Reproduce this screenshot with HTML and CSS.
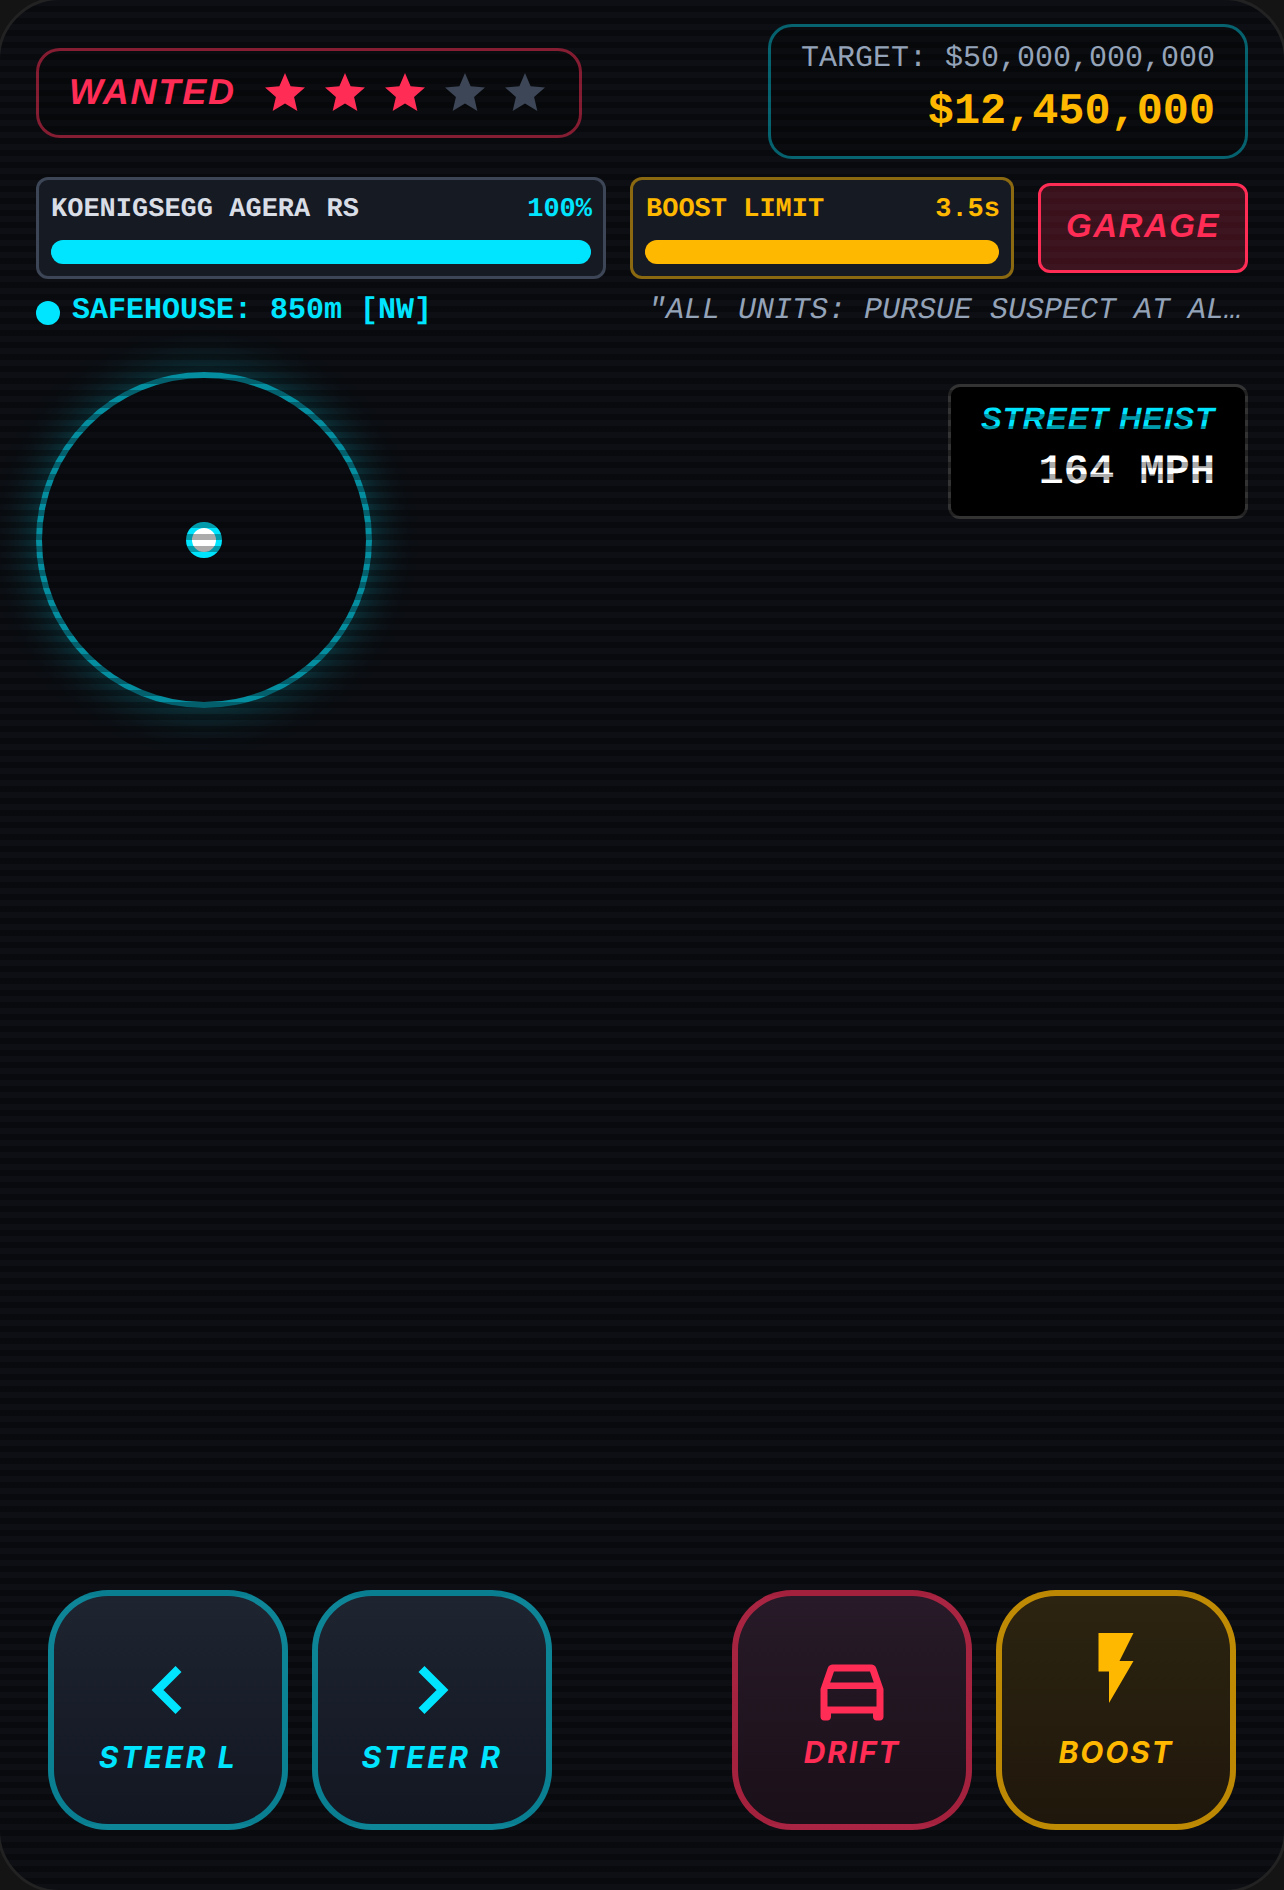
FILE: index.html
```html
<!DOCTYPE html>
<html lang="en">
<head>
    <meta charset="UTF-8">
    <meta name="viewport" content="width=device-width, initial-scale=1.0">
    <title>Street Heist</title>
    <link rel="stylesheet" href="styles.css">
</head>
<body>
    <div class="frame">
        <div class="scanlines"></div>

        <div class="hud">
            <div class="top-row">
                <div class="wanted">
                    <span class="wanted-label">WANTED</span>
                    <div class="stars">
                        <svg class="star on" viewBox="0 0 24 24"><path d="M12 17.27L18.18 21l-1.64-7.03L22 9.24l-7.19-.61L12 2 9.19 8.63 2 9.24l5.46 4.73L5.82 21z"/></svg>
                        <svg class="star on" viewBox="0 0 24 24"><path d="M12 17.27L18.18 21l-1.64-7.03L22 9.24l-7.19-.61L12 2 9.19 8.63 2 9.24l5.46 4.73L5.82 21z"/></svg>
                        <svg class="star on" viewBox="0 0 24 24"><path d="M12 17.27L18.18 21l-1.64-7.03L22 9.24l-7.19-.61L12 2 9.19 8.63 2 9.24l5.46 4.73L5.82 21z"/></svg>
                        <svg class="star" viewBox="0 0 24 24"><path d="M12 17.27L18.18 21l-1.64-7.03L22 9.24l-7.19-.61L12 2 9.19 8.63 2 9.24l5.46 4.73L5.82 21z"/></svg>
                        <svg class="star" viewBox="0 0 24 24"><path d="M12 17.27L18.18 21l-1.64-7.03L22 9.24l-7.19-.61L12 2 9.19 8.63 2 9.24l5.46 4.73L5.82 21z"/></svg>
                    </div>
                </div>
                <div class="money">
                    <div class="money-target">TARGET: $50,000,000,000</div>
                    <div class="money-value">$12,450,000</div>
                </div>
            </div>

            <div class="status-row">
                <div class="gauge gauge-car">
                    <div class="gauge-head">
                        <span class="car-name">KOENIGSEGG AGERA RS</span>
                        <span class="car-health">100%</span>
                    </div>
                    <div class="bar bar-cyan"></div>
                </div>
                <div class="gauge gauge-boost">
                    <div class="gauge-head">
                        <span>BOOST LIMIT</span>
                        <span>3.5s</span>
                    </div>
                    <div class="bar bar-amber"></div>
                </div>
                <button class="garage">GARAGE</button>
            </div>

            <div class="info-row">
                <div class="safehouse">
                    <span class="safehouse-dot"></span>
                    <span>SAFEHOUSE: 850m [NW]</span>
                </div>
                <div class="radio">"ALL UNITS: PURSUE SUSPECT AT AL…</div>
            </div>
        </div>

        <div class="field-row">
            <div class="radar">
                <span class="radar-dot"></span>
            </div>
            <div class="speed">
                <div class="speed-title">STREET HEIST</div>
                <div class="speed-value">164 MPH</div>
            </div>
        </div>

        <div class="controls">
            <div class="control-group">
                <button class="pad pad-steer">
                    <svg class="chevron" viewBox="0 0 24 24"><path d="M15.5 19l-7-7 7-7"/></svg>
                    <span>STEER L</span>
                </button>
                <button class="pad pad-steer">
                    <svg class="chevron" viewBox="0 0 24 24"><path d="M8.5 5l7 7-7 7"/></svg>
                    <span>STEER R</span>
                </button>
            </div>
            <div class="control-group">
                <button class="pad pad-drift">
                    <svg class="glyph" viewBox="0 0 24 24"><path d="M18.92 6.01C18.72 5.42 18.16 5 17.5 5h-11c-.66 0-1.21.42-1.42 1.01L3 12v8c0 .55.45 1 1 1h1c.55 0 1-.45 1-1v-1h12v1c0 .55.45 1 1 1h1c.55 0 1-.45 1-1v-8l-2.08-5.99zM6.85 7h10.29l1.08 3.11H5.77L6.85 7zM19 17H5v-5h14v5z"/></svg>
                    <span>DRIFT</span>
                </button>
                <button class="pad pad-boost">
                    <svg class="glyph bolt" viewBox="0 0 24 24"><path d="M7 2v11h3v9l7-12h-4l4-8z"/></svg>
                    <span>BOOST</span>
                </button>
            </div>
        </div>
    </div>
</body>
</html>
```

FILE: styles.css
```css
* {
    box-sizing: border-box;
}

html, body {
    margin: 0;
    height: 100%;
}

body {
    background-color: #141414;
    font-family: "Liberation Mono", monospace;
    text-rendering: geometricPrecision;
    overflow: hidden;
}

/* the 3px border hangs just outside the window, only the corners show it */
.frame {
    position: relative;
    width: 1290px;
    height: 1896px;
    margin: -3px;
    padding: 24px 36px 60px;
    display: flex;
    flex-direction: column;
    background-color: #0d0f14;
    border: 3px solid #222222;
    border-radius: 63px;
    overflow: hidden;
}

/* crt lines: over the map layer, under the hud and the pads */
.scanlines {
    position: absolute;
    inset: 0;
    background-image: repeating-linear-gradient(180deg, transparent 0, transparent 6px, rgba(0, 0, 0, 0.33) 6px, rgba(0, 0, 0, 0.33) 12px);
    pointer-events: none;
    z-index: 5;
}

.hud {
    position: relative;
    z-index: 6;
}

.top-row {
    display: flex;
    justify-content: space-between;
    align-items: center;
}

.wanted {
    width: 546px;
    height: 90px;
    padding: 0 30px;
    margin-top: 3px;
    display: flex;
    align-items: center;
    justify-content: space-between;
    background-color: rgba(0, 0, 0, 0.2);
    border: 3px solid rgba(255, 45, 85, 0.5);
    border-radius: 24px;
}

.wanted-label {
    margin-top: -2px;
    font-family: "Liberation Sans", sans-serif;
    font-size: 36px;
    font-weight: bold;
    font-style: italic;
    letter-spacing: 1.8px;
    color: #ff2d55;
}

.stars {
    display: flex;
    gap: 12px;
}

.star {
    width: 48px;
    height: 48px;
    fill: #3d4656;
}

.star.on {
    fill: #ff2d55;
}

.money {
    width: 480px;
    height: 135px;
    padding: 15px 30px 0;
    text-align: right;
    background-color: rgba(0, 0, 0, 0.2);
    border: 3px solid rgba(0, 229, 255, 0.4);
    border-radius: 24px;
}

.money-target {
    font-size: 30px;
    line-height: 34px;
    white-space: nowrap;
    color: #94a3b8;
}

.money-value {
    margin-top: 12px;
    font-size: 43.5px;
    line-height: 50px;
    font-weight: bold;
    color: #ffb800;
}

.status-row {
    margin-top: 18px;
    display: flex;
    align-items: center;
    gap: 24px;
}

.gauge {
    height: 102px;
    padding: 12px;
    background-color: #161a22;
    border: 3px solid #3d4656;
    border-radius: 12px;
}

.gauge-car {
    width: 570px;
}

.gauge-boost {
    width: 384px;
    border-color: rgba(255, 184, 0, 0.5);
    color: #ffb800;
}

.gauge-head {
    display: flex;
    justify-content: space-between;
    font-size: 27px;
    line-height: 36px;
    font-weight: bold;
}

.gauge-boost .gauge-head {
    margin: 0 -1px 0 1px;
}

.car-name {
    color: #d8dde6;
}

.car-health {
    margin-right: -1px;
    color: #00e5ff;
}

.bar {
    height: 24px;
    margin-top: 12px;
    border-radius: 12px;
}

.bar-cyan {
    background-color: #00e5ff;
}

.bar-amber {
    background-color: #ffb800;
}

.garage {
    width: 210px;
    height: 90px;
    padding: 0 0 4px;
    font-family: "Liberation Sans", sans-serif;
    font-size: 33px;
    font-weight: bold;
    font-style: italic;
    letter-spacing: 1.5px;
    color: #ff2d55;
    background-color: rgba(255, 45, 85, 0.2);
    border: 3px solid #ff2d55;
    border-radius: 12px;
}

.info-row {
    margin-top: 15px;
    display: flex;
    justify-content: space-between;
    align-items: center;
    font-size: 30px;
    line-height: 34px;
}

.safehouse {
    display: flex;
    align-items: center;
    gap: 12px;
    font-weight: bold;
    color: #00e5ff;
}

.safehouse-dot {
    width: 24px;
    height: 24px;
    margin-top: 4px;
    border-radius: 50%;
    background-color: #00e5ff;
}

.radio {
    width: 600px;
    white-space: nowrap;
    font-style: italic;
    color: #94a3b8;
}

.field-row {
    margin-top: 44px;
    display: flex;
    justify-content: space-between;
    align-items: flex-start;
}

.radar {
    width: 336px;
    height: 336px;
    display: flex;
    align-items: center;
    justify-content: center;
    background-color: rgba(0, 0, 0, 0.08);
    border: 6px solid rgba(0, 229, 255, 0.6);
    border-radius: 50%;
    box-shadow: 0 0 45px rgba(0, 229, 255, 0.3);
}

.radar-dot {
    width: 36px;
    height: 36px;
    background-color: #ffffff;
    border: 6px solid #00e5ff;
    border-radius: 50%;
}

.speed {
    width: 300px;
    height: 135px;
    margin-top: 12px;
    padding: 15px 30px 0;
    text-align: right;
    background-color: #000000;
    border: 3px solid #333333;
    border-radius: 12px;
}

.speed-title {
    font-family: "Liberation Sans", sans-serif;
    font-size: 31px;
    line-height: 34px;
    font-weight: bold;
    font-style: italic;
    letter-spacing: 1px;
    white-space: nowrap;
    color: #00e5ff;
}

.speed-value {
    margin-top: 12px;
    font-size: 42px;
    line-height: 48px;
    font-weight: bold;
    color: #ffffff;
}

.controls {
    position: relative;
    z-index: 6;
    margin-top: auto;
    padding: 0 12px;
    display: flex;
    justify-content: space-between;
}

.control-group {
    display: flex;
    gap: 24px;
}

.pad {
    width: 240px;
    height: 240px;
    padding: 0;
    display: flex;
    flex-direction: column;
    align-items: center;
    justify-content: center;
    font-family: Inter, sans-serif;
    font-size: 30px;
    line-height: 36px;
    font-weight: 700;
    font-style: italic;
    letter-spacing: 1.8px;
    border-radius: 60px;
    border: 6px solid;
}

.pad-steer {
    padding-top: 8px;
    letter-spacing: 2.6px;
    color: #00e5ff;
    background-image: linear-gradient(180deg, #1e2430, #121722);
    border-color: rgba(0, 229, 255, 0.5);
}

.pad-drift {
    color: #ff2d55;
    background-image: linear-gradient(180deg, #281a28, #1a1019);
    border-color: rgba(255, 45, 85, 0.6);
}

.pad-boost {
    color: #ffb800;
    background-image: linear-gradient(180deg, #2c2410, #20170c);
    border-color: rgba(255, 184, 0, 0.7);
}

.chevron {
    width: 72px;
    height: 72px;
    margin-bottom: 13px;
    fill: none;
    stroke: #00e5ff;
    stroke-width: 2.8;
}

.glyph {
    width: 84px;
    height: 84px;
    margin-top: -3px;
    margin-bottom: 3px;
    fill: currentColor;
}

/* bolt drawing sits higher than the car in its button */
.bolt {
    margin-top: -24px;
    margin-bottom: 24px;
}
```
